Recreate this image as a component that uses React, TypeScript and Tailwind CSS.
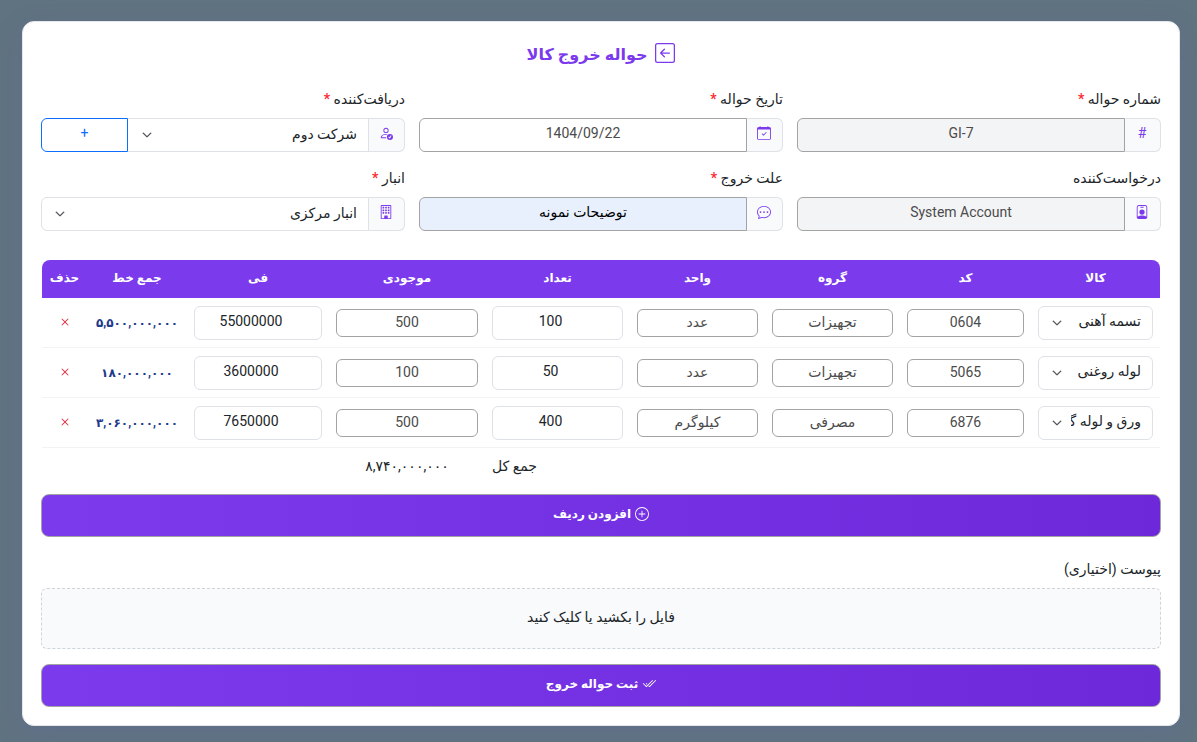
import { useState, type ReactNode } from "react";
import {
  BsArrowLeftSquare,
  BsBuilding,
  BsCalendarCheck,
  BsChatDots,
  BsCheck2All,
  BsChevronDown,
  BsPersonBadge,
  BsPersonCheck,
  BsPlusCircle,
  BsX,
} from "react-icons/bs";

type Row = { item: string; code: string; group: string; unit: string; qty: number; stock: number; price: number };

const initialRows: Row[] = [
  { item: "تسمه آهنی", code: "0604", group: "تجهیزات", unit: "عدد", qty: 100, stock: 500, price: 55000000 },
  { item: "لوله روغنی", code: "5065", group: "تجهیزات", unit: "عدد", qty: 50, stock: 100, price: 3600000 },
  { item: "ورق و لوله گالوانیزه", code: "6876", group: "مصرفی", unit: "کیلوگرم", qty: 400, stock: 500, price: 7650000 },
];

const columns = [
  { title: "کالا", width: "w-[129px]" },
  { title: "کد", width: "w-[131px]" },
  { title: "گروه", width: "w-[135px]" },
  { title: "واحد", width: "w-[135px]" },
  { title: "تعداد", width: "w-[145px]" },
  { title: "موجودی", width: "w-[156px]" },
  { title: "فی", width: "w-[142px]" },
  { title: "جمع خط", width: "w-[100px]" },
  { title: "حذف", width: "w-[45px]" },
];

function toFa(n: number) {
  return n
    .toString()
    .replace(/\B(?=(\d{3})+$)/g, ",")
    .replace(/\d/g, (d) => "۰۱۲۳۴۵۶۷۸۹"[Number(d)]);
}

function Field({
  id,
  label,
  required,
  icon,
  children,
}: {
  id: string;
  label: string;
  required?: boolean;
  icon: ReactNode;
  children: ReactNode;
}) {
  return (
    <div className="min-w-0">
      <label htmlFor={id} className="mb-2 block h-5 leading-[18px]">
        {label}
        {required && <span className="font-bold text-red-500"> *</span>}
      </label>
      <div className="flex h-[34px]">
        <span className="flex w-9 shrink-0 items-center justify-center rounded-r-md border border-l-0 border-[#dee2e6] bg-[#f8fafc] pb-1 pr-px text-[#7c3aed]">
          {icon}
        </span>
        {children}
      </div>
    </div>
  );
}

function Select({
  id,
  label,
  value,
  wrap,
  className,
}: {
  id?: string;
  label?: string;
  value: string;
  wrap: string;
  className: string;
}) {
  return (
    <div className={`relative min-w-0 ${wrap}`}>
      <select
        id={id}
        aria-label={label}
        className={`h-[34px] w-full appearance-none border border-[#dee2e6] bg-white pb-0.5 pr-[11px] ${className}`}
      >
        <option>{value}</option>
      </select>
      <BsChevronDown className="pointer-events-none absolute left-[14px] top-3 size-[10px] stroke-1 text-[#343a40]" />
    </div>
  );
}

const textInput = "min-w-0 flex-1 rounded-l-md border border-[#a3a3a3] pb-1 text-center";
const readOnlyCell = "block h-7 w-full rounded-md border border-[#a3a3a3] bg-white pb-0.5 text-center text-[#4b4b4b]";
const editCell = "block h-[34px] w-full rounded-md border border-[#dee2e6] bg-white pb-1 pl-[14px] pr-7 text-center";
const bigButton =
  "flex h-[43px] w-full items-center justify-center gap-1 rounded-lg border border-[#a3a3a3] bg-linear-to-r from-[#7c3aed] to-[#6d28d9] pb-1 font-bold text-white";

export default function App() {
  const [rows, setRows] = useState(initialRows);
  const total = rows.reduce((sum, r) => sum + r.qty * r.price, 0);

  const setCell = (i: number, key: "qty" | "price", value: string) =>
    setRows(rows.map((r, j) => (j === i ? { ...r, [key]: Number(value) || 0 } : r)));

  return (
    <div
      dir="rtl"
      lang="fa"
      className="min-h-screen bg-[#607380] px-[17px] pb-4 pl-[22px] pt-[21px] font-[Roboto,'DejaVu_Sans',sans-serif] text-[14px] text-[#212529]"
    >
      <form
        onSubmit={(e) => e.preventDefault()}
        className="rounded-xl border border-[#e5e7eb] bg-white px-[18px] pb-[18px] pt-[18px] shadow-[0_8px_24px_rgba(99,102,160,0.3)]"
      >
        <h1 className="flex h-7 items-center justify-center gap-2 pb-0.5 text-base font-bold text-[#7c3aed]">
          <BsArrowLeftSquare className="size-5" />
          <span className="pt-1">حواله خروج کالا</span>
        </h1>

        <div className="mt-[22px] grid grid-cols-3 gap-x-[14px] gap-y-[17px]">
          <Field id="number" label="شماره حواله" required icon="#">
            <input id="number" readOnly defaultValue="GI-7" className={`${textInput} bg-[#f3f4f6] text-[#4b4b4b]`} />
          </Field>
          <Field id="date" label="تاریخ حواله" required icon={<BsCalendarCheck />}>
            <input id="date" defaultValue="1404/09/22" className={`${textInput} bg-white text-[#4b4b4b]`} />
          </Field>
          <Field id="receiver" label="دریافت‌کننده" required icon={<BsPersonCheck />}>
            <Select id="receiver" value="شرکت دوم" wrap="flex-1" className="border-l-0" />
            <button
              type="button"
              aria-label="افزودن دریافت‌کننده"
              className="w-[87px] rounded-l-md border border-[#0d6efd] pb-1 text-[#0d6efd]"
            >
              +
            </button>
          </Field>
          <Field id="requester" label="درخواست‌کننده" icon={<BsPersonBadge />}>
            <input
              id="requester"
              readOnly
              defaultValue="System Account"
              className={`${textInput} bg-[#f3f4f6] text-[#4b4b4b]`}
            />
          </Field>
          <Field id="reason" label="علت خروج" required icon={<BsChatDots />}>
            <input id="reason" defaultValue="توضیحات نمونه" className={`${textInput} bg-[#e8f0fe] text-black`} />
          </Field>
          <Field id="store" label="انبار" required icon={<BsBuilding />}>
            <Select id="store" value="انبار مرکزی" wrap="flex-1" className="rounded-l-md" />
          </Field>
        </div>

        <div className="mt-[29px] px-px">
          <table className="w-full table-fixed border-separate border-spacing-0">
            <thead>
              <tr className="h-[38px] text-[12px] text-white">
                {columns.map((c) => (
                  <th
                    key={c.title}
                    className={`${c.width} bg-[#7c3aed] pb-0.5 font-bold first:rounded-tr-lg last:rounded-tl-lg`}
                  >
                    {c.title}
                  </th>
                ))}
              </tr>
            </thead>
            <tbody>
              {rows.map((r, i) => (
                <tr key={r.code} className="h-[50px] *:border-b *:border-[#f1f3f5] *:px-[7px]">
                  <td>
                    <Select label="کالا" value={r.item} wrap="w-full" className="rounded-md pl-8" />
                  </td>
                  <td>
                    <input aria-label="کد" readOnly value={r.code} className={readOnlyCell} />
                  </td>
                  <td>
                    <input aria-label="گروه" readOnly value={r.group} className={readOnlyCell} />
                  </td>
                  <td>
                    <input aria-label="واحد" readOnly value={r.unit} className={readOnlyCell} />
                  </td>
                  <td>
                    <input
                      aria-label="تعداد"
                      value={r.qty}
                      onChange={(e) => setCell(i, "qty", e.target.value)}
                      className={editCell}
                    />
                  </td>
                  <td>
                    <input aria-label="موجودی" readOnly value={r.stock} className={readOnlyCell} />
                  </td>
                  <td>
                    <input
                      aria-label="فی"
                      value={r.price}
                      onChange={(e) => setCell(i, "price", e.target.value)}
                      className={editCell}
                    />
                  </td>
                  <td className="whitespace-nowrap text-center text-[12px] font-bold text-[#1e3a8a]">
                    {toFa(r.qty * r.price)}
                  </td>
                  <td className="pb-0.5">
                    <button
                      type="button"
                      aria-label="حذف"
                      onClick={() => setRows(rows.filter((_, j) => j !== i))}
                      className="mx-auto block text-[#dc3545]"
                    >
                      <BsX className="size-4" />
                    </button>
                  </td>
                </tr>
              ))}
            </tbody>
            <tfoot>
              <tr className="h-9">
                <td colSpan={4} />
                <td className="pl-[7px] text-left">جمع کل</td>
                <td className="text-center">{toFa(total)}</td>
                <td colSpan={3} />
              </tr>
            </tfoot>
          </table>
        </div>

        <button type="button" className={`${bigButton} mt-[10px]`}>
          <BsPlusCircle />
          <span className="text-[12px]">افزودن ردیف</span>
        </button>

        <label htmlFor="attachment" className="mt-[21px] block h-6 leading-[22px]">
          پیوست (اختیاری)
        </label>
        <label className="mt-[6px] flex h-[61px] cursor-pointer items-center justify-center rounded-md border border-dashed border-[#ced4da] bg-[#f8fafc] pb-0.5">
          فایل را بکشید یا کلیک کنید
          <input id="attachment" type="file" className="sr-only" />
        </label>

        <button type="submit" className={`${bigButton} mt-[15px]`}>
          <BsCheck2All />
          <span className="text-[12px]">ثبت حواله خروج</span>
        </button>
      </form>
    </div>
  );
}
